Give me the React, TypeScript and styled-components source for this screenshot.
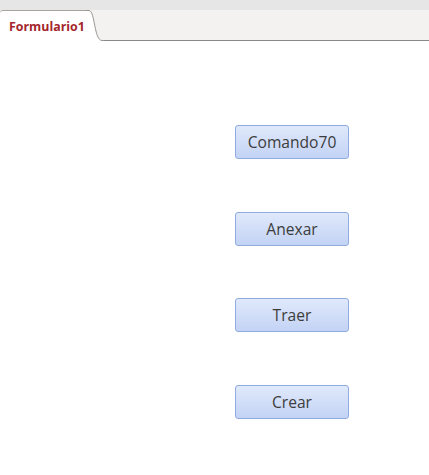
import React from "react";
import styled, { createGlobalStyle } from "styled-components";

const GlobalStyle = createGlobalStyle`
  html, body {
    margin: 0;
    padding: 0;
    background: #ffffff;
  }
  body {
    font-family: "Open Sans", "Noto Sans", "DejaVu Sans", sans-serif;
  }
`;

const Page = styled.div`
  width: 429px;
  height: 475px;
  display: flex;
  flex-direction: column;
  background: #ffffff;
  overflow: hidden;
`;

const TopBand = styled.div`
  height: 10px;
  background: #e6e6e6;
`;

const TabBar = styled.div`
  display: flex;
  height: 31px;
  background: #f3f2f1;
`;

const Tab = styled.div`
  width: 86px;
  box-sizing: border-box;
  background: #ffffff;
  border-top: 1px solid #a8a29c;
  border-top-left-radius: 3px;
  display: flex;
  align-items: center;
  padding-left: 9px;
  color: #a4262c;
  font-size: 12.4px;
  font-weight: 700;
  white-space: nowrap;
`;

const TabCurve = styled.svg`
  display: block;
  width: 18px;
  height: 31px;
  flex: none;
`;

const Filler = styled.div`
  flex: 1;
  border-bottom: 1px solid #8a8886;
`;

const Body = styled.div`
  display: flex;
  flex-direction: column;
  align-items: flex-start;
  gap: 52.7px;
  padding: 84px 0 0 235px;
`;

const CommandButton = styled.button`
  width: 114px;
  height: 34px;
  box-sizing: border-box;
  border: 1px solid #8fabe0;
  border-radius: 3px;
  background: linear-gradient(#e0e9fb, #c3d3f5);
  color: #3c3c3c;
  font-family: "Open Sans", "Noto Sans", sans-serif;
  font-size: 15.6px;
  padding: 0;
  cursor: pointer;
`;

const buttons = ["Comando70", "Anexar", "Traer", "Crear"];

export default function App() {
  return (
    <Page>
      <GlobalStyle />
      <TopBand />
      <TabBar>
        <Tab>Formulario1</Tab>
        <TabCurve viewBox="0 0 18 31">
          <path d="M0 0 L3 0 C9 0 8 30 16 30 L18 30 L18 31 L0 31 Z" fill="#ffffff" />
          <path d="M0 0.5 L3 0.5 C9 0.5 8 30.5 16 30.5 L18 30.5" fill="none" stroke="#9a958f" strokeWidth="1" />
        </TabCurve>
        <Filler />
      </TabBar>
      <Body>
        {buttons.map((b) => (
          <CommandButton key={b}>{b}</CommandButton>
        ))}
      </Body>
    </Page>
  );
}
